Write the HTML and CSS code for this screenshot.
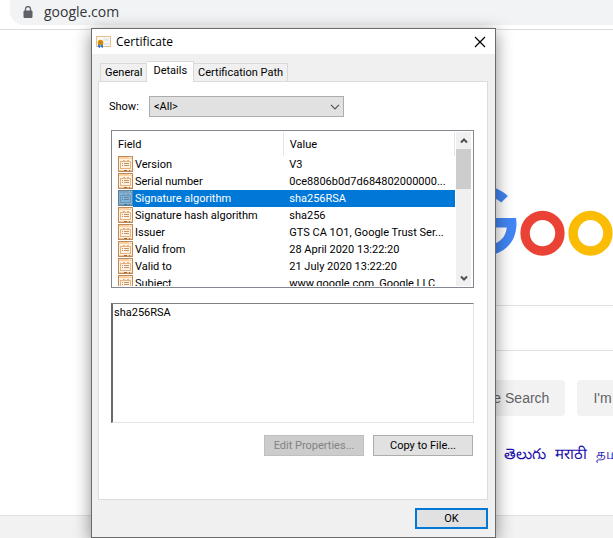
FILE: index.html
```html
<!DOCTYPE html>
<html lang="en">
<head>
<meta charset="utf-8">
<title>Certificate</title>
<link rel="stylesheet" href="styles.css">
</head>
<body>
<svg class="defs" aria-hidden="true">
  <symbol id="field" viewBox="0 0 15 16">
    <path d="M0 0h15v16H0z" fill="#bd8a5c"/>
    <path d="M1 1h13v14H1z" fill="#fff1e0"/>
    <path d="M1 1h13v2H1z" fill="#ffcf9f"/>
    <path d="M11 1h1v1h-1zM13 1h1v1h-1z" fill="#fff"/>
    <path d="M2 5h11v8H2zM3 6v6h9V6z" fill="#e3b384" fill-rule="evenodd"/>
    <path d="M5 4h2v1H5zM9 4h2v1H9z" fill="#e3b384"/>
    <path d="M4 7h1v1H4zM4 9h1v1H4zM6 7h5v1H6zM6 9h5v1H6z" fill="#c4956c"/>
    <path d="M1 14h13v1H1z" fill="#f6c797"/>
    <path d="M6 14h3v1H6zM11 14h1v1h-1z" fill="#9b693c"/>
  </symbol>
</svg>
<header class="toolbar">
  <div class="address">
    <svg width="10" height="12" viewBox="0 0 10 12" aria-hidden="true"><path d="M1 5h8v6.500H1z" fill="#5f6368" stroke="#5f6368" stroke-linejoin="round"/><path d="M2.500 5V3a2.500 2.500 0 0 1 5 0v2" fill="none" stroke="#5f6368" stroke-width="1.300"/></svg>
    <span>google.com</span>
  </div>
</header>
<main class="page">
  <svg class="logo" width="272" height="92" viewBox="0 0 272 92" role="img" aria-label="Google">
    <path fill="#4285f4" d="M35.290 41.410V32H67c.310 1.640.470 3.580.470 5.680 0 7.060-1.930 15.790-8.150 22.010-6.050 6.300-13.780 9.660-24.020 9.660C16.320 69.350.360 53.890.360 34.910.360 15.930 16.320.470 35.300.470c10.500 0 17.980 4.120 23.600 9.490l-6.640 6.640c-4.030-3.780-9.490-6.720-16.970-6.720-13.860 0-24.700 11.170-24.700 25.030 0 13.860 10.840 25.030 24.700 25.030 8.990 0 14.110-3.610 17.390-6.890 2.660-2.660 4.410-6.460 5.100-11.650z"/>
    <ellipse cx="93.500" cy="47.200" rx="17.400" ry="17.800" fill="none" stroke="#ea4335" stroke-width="9.400"/>
    <ellipse cx="141.500" cy="47.200" rx="17.400" ry="17.800" fill="none" stroke="#fbbc05" stroke-width="9.400"/>
  </svg>
  <div class="search"></div>
  <div class="actions">
    <button type="button">Google Search</button>
    <button type="button">I'm Feeling Lucky</button>
  </div>
  <nav class="languages"><a href="#" lang="te">తెలుగు</a><a href="#" lang="mr">मराठी</a><a href="#" lang="ta">தமிழ்</a></nav>
</main>
<footer class="footer"></footer>

<section class="dialog" role="dialog" aria-labelledby="dialog-title">
  <div class="titlebar">
    <svg width="15" height="14" viewBox="0 0 15 14" aria-hidden="true">
      <rect x="0.500" y="1.500" width="14" height="10" fill="#fff8ee" stroke="#e3bd93"/>
      <path d="M7 3h6v3H7zM7 8h6v2H7z" fill="#e6e9ed"/>
      <path d="M2 9h3l-1 4-2-1zM5 9h2v4l-2-1z" fill="#2f73d8"/>
      <circle cx="4.500" cy="7.500" r="2.800" fill="#dc930e"/><circle cx="4.500" cy="7.500" r="1.200" fill="#b8770c"/>
    </svg>
    <h1 id="dialog-title">Certificate</h1>
    <button type="button" class="close" aria-label="Close"><svg width="12" height="12" viewBox="0 0 12 12"><path d="M1 1l10 10M11 1L1 11" stroke="#000" stroke-width="1.200"/></svg></button>
  </div>
  <div class="tabs" role="tablist">
    <button type="button" role="tab" aria-selected="false">General</button>
    <button type="button" role="tab" aria-selected="true">Details</button>
    <button type="button" role="tab" aria-selected="false">Certification Path</button>
  </div>
  <div class="panel" role="tabpanel">
    <div class="show">
      <label for="show">Show:</label>
      <div class="pick">
        <select id="show"><option>&lt;All&gt;</option></select>
        <svg width="10" height="6" viewBox="0 0 10 6" aria-hidden="true"><path d="M1 .800l4 4 4-4" fill="none" stroke="#555" stroke-width="1.200"/></svg>
      </div>
    </div>
    <div class="list">
      <div class="rows">
        <table>
          <thead><tr><th>Field</th><th>Value</th></tr></thead>
          <tbody>
            <tr><td><div class="field"><svg><use href="#field"/></svg><span>Version</span></div></td><td>V3</td></tr>
            <tr><td><div class="field"><svg><use href="#field"/></svg><span>Serial number</span></div></td><td>0ce8806b0d7d684802000000...</td></tr>
            <tr class="selected"><td><div class="field"><i class="tint"><svg><use href="#field"/></svg></i><span>Signature algorithm</span></div></td><td>sha256RSA</td></tr>
            <tr><td><div class="field"><svg><use href="#field"/></svg><span>Signature hash algorithm</span></div></td><td>sha256</td></tr>
            <tr><td><div class="field"><svg><use href="#field"/></svg><span>Issuer</span></div></td><td>GTS CA 1O1, Google Trust Ser...</td></tr>
            <tr><td><div class="field"><svg><use href="#field"/></svg><span>Valid from</span></div></td><td>28 April 2020 13:22:20</td></tr>
            <tr><td><div class="field"><svg><use href="#field"/></svg><span>Valid to</span></div></td><td>21 July 2020 13:22:20</td></tr>
            <tr><td><div class="field"><svg><use href="#field"/></svg><span>Subject</span></div></td><td>www.google.com, Google LLC</td></tr>
          </tbody>
        </table>
      </div>
      <div class="scroll">
        <button type="button" aria-label="Scroll up"><svg width="8" height="6" viewBox="0 0 8 6"><path d="M1 4.500l3-3 3 3" fill="none" stroke="#505050" stroke-width="2"/></svg></button>
        <div class="thumb"></div>
        <button type="button" aria-label="Scroll down"><svg width="8" height="6" viewBox="0 0 8 6"><path d="M1 1.500l3 3 3-3" fill="none" stroke="#505050" stroke-width="2"/></svg></button>
      </div>
    </div>
    <textarea aria-label="Field value" readonly>sha256RSA</textarea>
    <div class="buttons">
      <button type="button" class="btn" disabled>Edit Properties...</button>
      <button type="button" class="btn">Copy to File...</button>
    </div>
  </div>
  <div class="bottom"><button type="button" class="btn ok">OK</button></div>
</section>
</body>
</html>
```
FILE: styles.css
```css
* { box-sizing: border-box; }
body {
  margin: 0;
  height: 100vh;
  display: flex;
  flex-direction: column;
  overflow: hidden;
  position: relative;
  background: #fff;
  font-family: "Liberation Sans", sans-serif;
}
button, select, textarea { font: inherit; color: inherit; margin: 0; border-radius: 0; }
.defs { position: absolute; width: 0; height: 0; }

.toolbar { flex: none; height: 30px; border-bottom: 1px solid #dadce0; }
.address {
  height: 25px;
  margin-left: 10px;
  padding: 0 0 2px 13px;
  display: flex;
  align-items: center;
  gap: 11px;
  background: #f1f3f4;
  border-bottom-left-radius: 14px;
  font: 14px/20px "Open Sans", sans-serif;
  color: #333639;
}

.page { flex: 1; min-height: 0; overflow: hidden; padding-top: 156px; }
.logo { display: block; margin-left: 449px; }
.search {
  height: 46px;
  margin: 27px -160px 0 293px;
  border: 1px solid #dfe1e5;
  border-radius: 24px;
}
.actions {
  display: flex;
  gap: 12px;
  margin: 29px 0 0 440px;
}
.actions button {
  flex: none;
  height: 36px;
  padding: 0 16px;
  border: 0;
  border-radius: 4px;
  background: #f2f2f2;
  color: #5f6368;
  font-size: 14px;
  white-space: nowrap;
}
.languages {
  display: flex;
  gap: 9px;
  margin: 28px 0 0 504px;
  font-size: 15px;
  line-height: 20px;
  white-space: nowrap;
}
.languages a { color: #1a0dab; text-decoration: none; }
.footer { flex: none; height: 23px; background: #f2f2f2; border-top: 1px solid #dfe0e2; }

.dialog {
  position: absolute;
  left: 91px;
  top: 28px;
  width: 405px;
  background: #f0f0f0;
  border: 1px solid #6b6b6b;
  box-shadow: 0 4px 16px rgba(0, 0, 0, .45);
  padding: 0 7px 8px 6px;
  font: 11px/17px Roboto, Tahoma, sans-serif;
  color: #000;
}
.titlebar {
  display: flex;
  align-items: center;
  gap: 5px;
  height: 25px;
  margin: 0 -7px 0 -6px;
  padding: 0 9px 0 4px;
  background: #fff;
}
.titlebar h1 { flex: 1; margin: 0; font: 12px/16px "Open Sans", sans-serif; }
.close { display: flex; border: 0; padding: 0; background: none; }

.tabs {
  display: flex;
  align-items: flex-end;
  padding: 7px 0 0 2px;
}
.tabs button {
  height: 18px;
  padding: 0 4px;
  line-height: 17px;
  background: #f0f0f0;
  border: 1px solid #d9d9d9;
  border-bottom: 0;
  white-space: nowrap;
}
.tabs button + button { border-left: 0; }
.tabs [aria-selected="true"] {
  position: relative;
  height: 21px;
  padding: 0 6px 3px;
  margin-bottom: -1px;
  background: #fff;
}
.panel {
  background: #fff;
  border: 1px solid #dcdcdc;
  padding: 14px 13px 43px 12px;
}
.show { display: flex; align-items: center; margin-left: -2px; }
.show label { flex: none; width: 40px; }
.pick { position: relative; flex: none; width: 195px; }
.pick select {
  display: block;
  appearance: none;
  width: 100%;
  height: 21px;
  padding: 0 4px;
  background: #e1e1e1;
  border: 1px solid #adadad;
}
.pick svg { position: absolute; right: 4px; top: 8px; pointer-events: none; }

.list {
  display: flex;
  height: 158px;
  margin-top: 13px;
  padding: 1px 2px 1px 0;
  border: 1px solid #828790;
}
.rows { flex: 1; overflow: hidden; }
table { width: 100%; table-layout: fixed; border-collapse: collapse; }
th { height: 24px; padding: 0 6px; text-align: left; font-weight: normal; border-right: 1px solid #e5e5e5; }
td { height: 17px; padding: 0 0 0 6px; white-space: nowrap; }
.field { display: flex; align-items: flex-start; }
.field svg { display: block; flex: none; width: 15px; height: 16px; }
.field span { flex: 1; padding-left: 2px; }
.selected td + td, .selected span { background: #0078d7; color: #fff; }
.tint { position: relative; flex: none; }
.tint::after { content: ""; position: absolute; inset: 0; background: rgba(0, 120, 215, .5); }
.scroll { flex: none; display: flex; flex-direction: column; width: 15px; margin-left: 1px; background: #f0f0f0; }
.scroll button { display: flex; align-items: center; justify-content: center; height: 17px; padding: 0; border: 0; background: none; }
.thumb { height: 40px; margin-bottom: auto; background: #cdcdcd; }

textarea {
  display: block;
  width: 100%;
  height: 120px;
  margin-top: 15px;
  padding: 0 1px;
  resize: none;
  outline: 0;
  background: #fff;
  border: 2px solid #696969;
  border-color: #808080 #e3e3e3 #e3e3e3 #696969;
  border-width: 1px 1px 1px 2px;
}
.buttons { display: flex; justify-content: flex-end; gap: 9px; margin-top: 12px; padding-right: 1px; }
.btn {
  width: 100px;
  height: 21px;
  padding: 0;
  background: #e1e1e1;
  border: 1px solid #adadad;
}
.btn:disabled { background: #ccc; border-color: #bfbfbf; color: #838383; }
.bottom { display: flex; justify-content: flex-end; margin-top: 8px; }
.ok { width: 73px; line-height: 17px; border: 2px solid #0078d7; }
```
